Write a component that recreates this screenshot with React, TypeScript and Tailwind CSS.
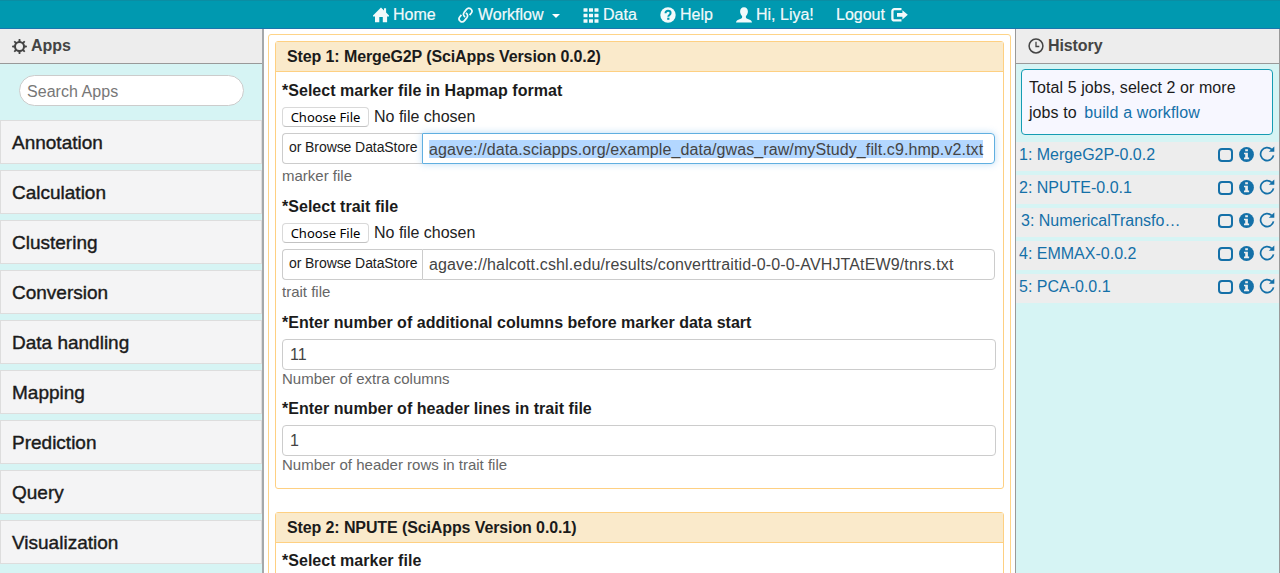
import React from "react";

const HomeIcon = () => (
  <svg className="h-4 w-4 shrink-0" viewBox="0 0 16 16" fill="currentColor">
    <path d="M8 .4 11 3.4V1.2h2.1v4.3L16 8.6v.8h-1.9v5.9H9.8V10H6.3v5.3H2V9.4H0v-.8z" />
  </svg>
);

const LinkIcon = () => (
  <svg className="h-4 w-4 shrink-0" viewBox="0 0 16 16" fill="none" stroke="currentColor" strokeWidth="1.700" strokeLinejoin="round">
    <path d="M7.200 9.900C5.300 9 4.900 7 6.100 5.400L8.500 2.400C9.600 1 11.300.8 12.700 1.800C14.100 2.900 14.300 4.700 13.300 6L11.600 8.100" />
    <path d="M7.800 6.100C9.700 7 10.100 9 8.900 10.600L6.500 13.600C5.400 15 3.700 15.200 2.300 14.200C.9 13.100.7 11.300 1.700 10L3.400 7.900" />
  </svg>
);

const GridIcon = () => (
  <svg className="h-[15px] w-4 shrink-0" viewBox="0 0 16 15" fill="currentColor">
    {[0, 5.5, 11].map((y) =>
      [0.5, 6, 11.5].map((x) => <rect key={`${x}-${y}`} x={x} y={y + 0.2} width="4" height="3.600" rx=".3" />)
    )}
  </svg>
);

const HelpIcon = () => (
  <svg className="h-4 w-4 shrink-0" viewBox="0 0 16 16">
    <circle cx="8" cy="8" r="7.700" fill="currentColor" />
    <path d="M5.500 6.200C5.500 4.600 6.500 3.800 8 3.800s2.600.9 2.600 2.200c0 1.900-2.300 1.900-2.300 3.700" fill="none" stroke="#0099b0" strokeWidth="2" />
    <rect x="7.200" y="10.700" width="2.200" height="2.100" fill="#0099b0" />
  </svg>
);

const UserIcon = () => (
  <svg className="h-4 w-4 shrink-0" viewBox="0 0 16 16" fill="currentColor">
    <path d="M8 .3c2.500 0 3.900 1.700 3.900 4.100 0 1.800-.8 3.600-2 4.600v1.600c0 .5.300.8.800 1l3.600 1.400c1 .4 1.500 1.300 1.700 2.500H0c.2-1.200.7-2.100 1.700-2.500l3.600-1.400c.5-.2.8-.5.8-1V9c-1.200-1-2-2.800-2-4.600C4.100 2 5.500.3 8 .3z" />
  </svg>
);

const LogoutIcon = () => (
  <svg className="h-4 w-[17px] shrink-0" viewBox="0 0 17 16">
    <path d="M10.500 2.200H3.400C2.200 2.200 1.400 3 1.400 4.100v7.300c0 1.200.8 2 2 2h7.100" fill="none" stroke="currentColor" strokeWidth="2.300" />
    <path d="M6 5.900h5.400V3.200l5.400 4.600-5.400 4.600V9.700H6z" fill="currentColor" />
  </svg>
);

const GearIcon = () => (
  <svg className="h-[15px] w-[15px] shrink-0" viewBox="0 0 15 15" fill="none" stroke="currentColor">
    <circle cx="7.500" cy="7.500" r="4.500" strokeWidth="2" />
    {[0, 45, 90, 135, 180, 225, 270, 315].map((a) => (
      <path key={a} d="M6.300 2.900 6.700.1H8.300L8.700 2.900z" fill="currentColor" stroke="none" transform={`rotate(${a} 7.500 7.500)`} />
    ))}
  </svg>
);

const ClockIcon = () => (
  <svg className="h-4 w-4 shrink-0" viewBox="0 0 16 16" fill="none" stroke="currentColor">
    <circle cx="8" cy="8" r="6.900" strokeWidth="1.500" />
    <path d="M8 3.800V8.500H11.300" strokeWidth="1.300" />
  </svg>
);

const InfoIcon = () => (
  <svg className="h-[15px] w-[15px] shrink-0" viewBox="0 0 15 15">
    <circle cx="7.500" cy="7.500" r="7.400" fill="currentColor" />
    <path d="M6.200 2.200h2.700v2.100H6.200zM5 5.700h3.900v4.800h1.200v1.700H5v-1.700h1.200V7.300H5z" fill="#ededed" />
  </svg>
);

const RefreshIcon = () => (
  <svg className="h-4 w-4 shrink-0" viewBox="0 0 16 16">
    <path d="M12.700 3.500A6.500 6.500 0 1 0 14.500 9.300" fill="none" stroke="currentColor" strokeWidth="1.700" />
    <path d="M15.300.4v5.400H9.800z" fill="currentColor" />
  </svg>
);

const categories = ["Annotation", "Calculation", "Clustering", "Conversion", "Data handling", "Mapping", "Prediction", "Query", "Visualization"];
const jobs = ["1: MergeG2P-0.0.2", "2: NPUTE-0.0.1", "3: NumericalTransfo…", "4: EMMAX-0.0.2", "5: PCA-0.0.1"];

function Label({ children }: { children: React.ReactNode }) {
  return <div className="h-[26px] pt-px text-[16px] leading-[26px] font-bold tracking-[0.03px] text-[#1b1b1b]">{children}</div>;
}

function FileField({ label, value, help, active }: { label: string; value: string; help: string; active?: boolean }) {
  return (
    <div className="h-[116px]">
      <Label>{label}</Label>
      <div className="mt-[2px] flex h-[23px] items-start">
        <button className="mt-[2px] h-[20px] w-[87px] rounded-[4px] border border-[#d9d9d9] border-b-[#c2c2c2] bg-white font-['Noto_Sans'] text-[13px] leading-[18px] text-black">Choose File</button>
        <span className="ml-[5px] text-[16px] leading-[23px] text-[#222]">No file chosen</span>
      </div>
      <div className="mt-[5px] flex h-[31px]">
        <div className="w-[140px] rounded-l-[4px] border border-r-0 border-[#ccc] pl-[6px] text-[14px] leading-[27px] tracking-[-0.08px] whitespace-nowrap text-[#1b1b1b]">or Browse DataStore</div>
        <div
          className={
            active
              ? "flex w-[573px] items-center rounded-r-[4px] border border-[#60afe0] pl-[6px] shadow-[0_0_7px_rgba(102,175,233,0.45)]"
              : "flex w-[573px] items-center rounded-r-[4px] border border-[#ccc] pl-[6px]"
          }
        >
          <span className={active ? "h-[18px] bg-[#b3d7ff] text-[16px] leading-[19px] tracking-[0.1px] whitespace-nowrap text-[#444]" : "text-[16px] leading-[19px] tracking-[0.14px] whitespace-nowrap text-[#444]"}>{value}</span>
        </div>
      </div>
      <div className="mt-[2px] text-[15px] leading-[20px] text-[#666]">{help}</div>
    </div>
  );
}

function NumberField({ label, value, help }: { label: string; value: string; help: string }) {
  return (
    <div className="h-[86px]">
      <Label>{label}</Label>
      <div className="mt-[4px] h-[31px] w-[714px] rounded-[4px] border border-[#ccc] pl-[7px] text-[16px] leading-[30px] text-[#444]">{value}</div>
      <div className="text-[15px] leading-[17px] text-[#666]">{help}</div>
    </div>
  );
}

export default function App() {
  return (
    <div className="flex h-[573px] w-[1280px] flex-col overflow-hidden bg-white font-['Liberation_Sans',Arial,sans-serif]">
      <nav className="flex h-[29px] shrink-0 border-t border-b border-t-[#0b8da3] border-b-[#1b75ae] bg-[#0099b0] pt-px pl-[373px] text-[16px] leading-[26px] text-white/95 [-webkit-text-stroke:0.2px_white]">
        <a className="flex w-[85px] items-center gap-[4px]"><HomeIcon />Home</a>
        <a className="flex w-[125px] items-center gap-[4px]"><LinkIcon />Workflow<i className="mt-[2px] ml-[4px] border-x-4 border-t-4 border-x-transparent border-t-white" /></a>
        <a className="flex w-[77px] items-center gap-[4px]"><GridIcon />Data</a>
        <a className="flex w-[76px] items-center gap-[4px]"><HelpIcon />Help</a>
        <a className="flex w-[100px] items-center gap-[4px]"><UserIcon />Hi, Liya!</a>
        <a className="flex items-center gap-[4px]">Logout<span className="ml-[2px]"><LogoutIcon /></span></a>
      </nav>
      <div className="flex min-h-0 flex-1">
        <aside className="w-[264px] shrink-0 border-r-2 border-[#a5a8aa] bg-[#d6f4f4]">
          <h2 className="flex h-[35px] items-center gap-[4px] border-b border-[#999] bg-[#ededed] pl-[12px] text-[16px] font-bold text-[#444]"><GearIcon />Apps</h2>
          <div className="mt-[11px] ml-[19px] h-[31px] w-[225px] rounded-full border border-[#ccc] bg-white pl-[7px] text-[16px] leading-[31px] tracking-[0.05px] text-[#777]">Search Apps</div>
          <ul className="mt-[14px] flex flex-col gap-[6px]">
            {categories.map((c) => (
              <li key={c} className="h-[44px] border border-[#ddd] bg-[#f4f4f5] pl-[11px] text-[19px] leading-[44px] text-[#1b1b1b] [-webkit-text-stroke:0.4px_#1b1b1b]">{c}</li>
            ))}
          </ul>
        </aside>
        <main className="min-w-0 flex-1 px-[4px] pt-[5px]">
          <div className="h-[600px] w-[743px] rounded-t-[3px] border border-[#fed488] px-[6px] pt-[6px]">
            <section className="h-[448px] w-[729px] rounded-[3px] border border-[#fed082]">
              <h3 className="h-[30px] border-b border-[#fed082] bg-[#faeacb] pl-[11px] text-[16px] leading-[30px] font-bold tracking-[-0.11px] text-[#1b1b1b]">Step 1: MergeG2P (SciApps Version 0.0.2)</h3>
              <div className="pt-[5px] pl-[6px]">
                <FileField label="*Select marker file in Hapmap format" value="agave://data.sciapps.org/example_data/gwas_raw/myStudy_filt.c9.hmp.v2.txt" help="marker file" active />
                <FileField label="*Select trait file" value="agave://halcott.cshl.edu/results/converttraitid-0-0-0-AVHJTAtEW9/tnrs.txt" help="trait file" />
                <NumberField label="*Enter number of additional columns before marker data start" value="11" help="Number of extra columns" />
                <NumberField label="*Enter number of header lines in trait file" value="1" help="Number of header rows in trait file" />
              </div>
            </section>
            <section className="mt-[23px] h-[200px] w-[729px] rounded-[3px] border border-[#fed082]">
              <h3 className="h-[30px] border-b border-[#fed082] bg-[#faeacb] pl-[11px] text-[16px] leading-[30px] font-bold tracking-[-0.11px] text-[#1b1b1b]">Step 2: NPUTE (SciApps Version 0.0.1)</h3>
              <div className="pt-[4px] pl-[6px]"><Label>*Select marker file</Label></div>
            </section>
          </div>
        </main>
        <aside className="w-[265px] shrink-0 border-x border-[#999] bg-[#d6f4f4]">
          <h2 className="flex h-[35px] items-center gap-[4px] border-b border-[#999] bg-[#ededed] pl-[12px] text-[16px] font-bold tracking-[-0.1px] text-[#444]"><ClockIcon />History</h2>
          <div className="mt-[5px] ml-[5px] h-[66px] w-[252px] rounded-[4px] border border-[#159cb3] bg-[#f7f7ff] pt-[5px] pl-[7px] text-[16px] leading-[25px] tracking-[0.07px] text-[#1b1b1b]">
            Total 5 jobs, select 2 or more<br />jobs to <a className="ml-[3px] tracking-[0.12px] text-[#1470a8]">build a workflow</a>
          </div>
          <ul className="mt-[7px] flex flex-col gap-[4px] text-[16px] text-[#1470a8]">
            {jobs.map((j, i) => (
              <li key={j} className={i === 2 ? "flex h-[29px] items-center bg-[#ededed] pb-[4px] pl-[5px]" : "flex h-[29px] items-center bg-[#ededed] pb-[4px] pl-[3px]"}>
                <span className="flex-1 whitespace-nowrap">{j}</span>
                <i className="mr-[6px] h-[14px] w-[15px] rounded-[4px] border-2 border-[#1470a8]" />
                <InfoIcon />
                <span className="mr-[4px] mb-[2px] ml-[5px]"><RefreshIcon /></span>
              </li>
            ))}
          </ul>
        </aside>
      </div>
    </div>
  );
}
